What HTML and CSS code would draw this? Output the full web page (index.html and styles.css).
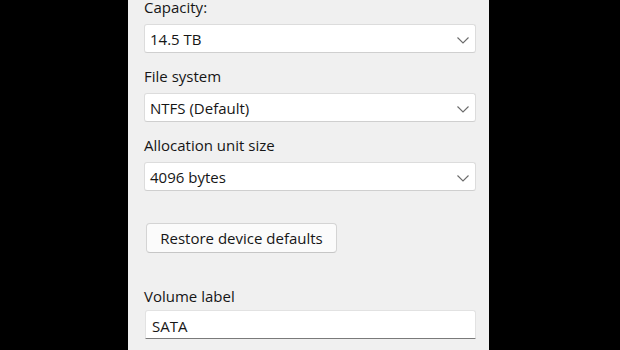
FILE: index.html
```html
<!DOCTYPE html>
<html lang="en">
<head>
    <meta charset="UTF-8">
    <meta name="viewport" content="width=device-width, initial-scale=1.0">
    <title>Format - SATA</title>
    <link rel="stylesheet" href="styles.css">
</head>
<body>
    <div class="screen">
        <main class="dialog">
            <div class="field">
                <label>Capacity:</label>
                <div class="select">
                    <span>14.5 TB</span>
                    <svg class="chevron" width="12" height="7" viewBox="0 0 12 7"><path d="M0.5 0.5 L6 6 L11.5 0.5" fill="none" stroke="#6b6b6b" stroke-width="1.1"/></svg>
                </div>
            </div>
            <div class="field">
                <label>File system</label>
                <div class="select">
                    <span>NTFS (Default)</span>
                    <svg class="chevron" width="12" height="7" viewBox="0 0 12 7"><path d="M0.5 0.5 L6 6 L11.5 0.5" fill="none" stroke="#6b6b6b" stroke-width="1.1"/></svg>
                </div>
            </div>
            <div class="field">
                <label>Allocation unit size</label>
                <div class="select">
                    <span>4096 bytes</span>
                    <svg class="chevron" width="12" height="7" viewBox="0 0 12 7"><path d="M0.5 0.5 L6 6 L11.5 0.5" fill="none" stroke="#6b6b6b" stroke-width="1.1"/></svg>
                </div>
            </div>
            <div class="actions">
                <button class="btn">Restore device defaults</button>
            </div>
            <div class="field volume">
                <label>Volume label</label>
                <div class="textbox">SATA</div>
            </div>
        </main>
    </div>
</body>
</html>
```

FILE: styles.css
```css
html, body {
    margin: 0;
    padding: 0;
}

body {
    background-color: #000;
    font-family: 'Open Sans', 'Noto Sans', sans-serif;
    font-size: 15px;
    color: #161616;
}

.screen {
    display: flex;
    height: 350px;
    overflow: hidden;
}

.dialog {
    margin-left: 128px;
    width: 361px;
    box-sizing: border-box;
    padding: 0 13px 0 16px;
    background-color: #f0f0f0;
    display: flex;
    flex-direction: column;
}

.field {
    display: flex;
    flex-direction: column;
    margin-bottom: 13px;
}

.field:first-child {
    margin-top: -3px;
}

.field label {
    line-height: 20px;
    margin-bottom: 7px;
}

.select {
    height: 29px;
    box-sizing: border-box;
    background-color: #fff;
    border: 1px solid #dcdcdc;
    border-bottom-color: #cfcfcf;
    border-radius: 3px;
    display: flex;
    align-items: center;
    justify-content: space-between;
    padding: 1px 6px 0 5px;
}

.chevron {
    margin-top: 2px;
}

.actions {
    padding: 19px 0 0 2px;
}

.btn {
    font: inherit;
    color: inherit;
    width: 191px;
    height: 30px;
    background-color: #fbfbfb;
    border: 1px solid #d4d4d4;
    border-bottom-color: #c6c6c6;
    border-radius: 4px;
    padding: 0;
}

.volume {
    margin-top: 33px;
}

.volume label {
    margin-bottom: 4px;
}

.textbox {
    margin-left: 1px;
    height: 29px;
    box-sizing: border-box;
    background-color: #fff;
    border: 1px solid #e2e2e2;
    border-bottom: 1px solid #7a7a7a;
    border-radius: 3px 3px 0 0;
    padding: 2px 6px 0 6px;
    display: flex;
    align-items: center;
}
```
